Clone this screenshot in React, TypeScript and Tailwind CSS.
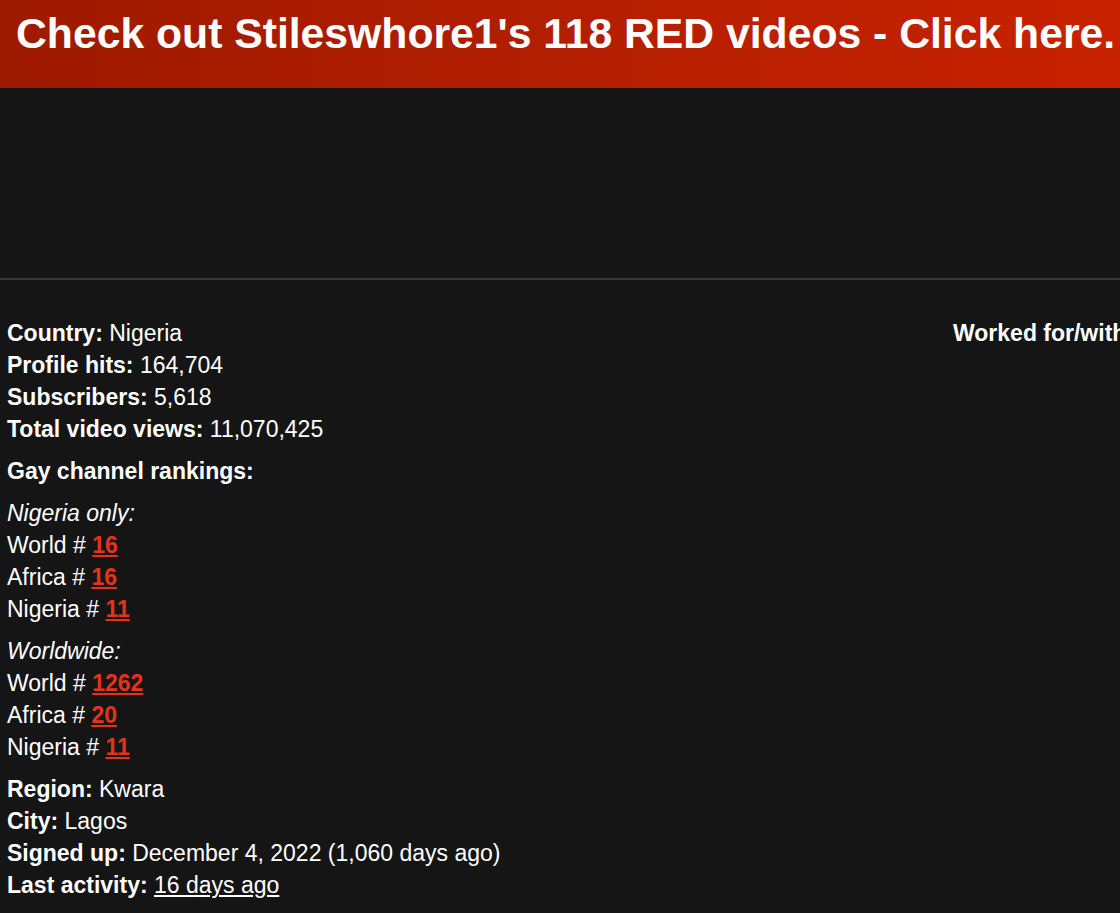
import React from "react";

const Stat = ({ label, children }: { label: string; children: React.ReactNode }) => (
  <div>
    <span className="font-bold">{label}</span> {children}
  </div>
);

const Rank = ({ label, n }: { label: string; n: string }) => (
  <div>
    {label} #{" "}
    <a href="#" className="font-bold text-[#e5321a] underline">
      {n}
    </a>
  </div>
);

const App = () => {
  return (
    <div className="min-h-[913px] bg-[#151515] text-white font-['Liberation_Sans',Arial,sans-serif] overflow-hidden">
      <a
        href="#"
        className="block h-[88px] bg-gradient-to-r from-[#9e1a00] to-[#c82200] pl-[16px] pt-[9px] text-[42.7px] font-bold leading-[48px] whitespace-nowrap"
      >
        Check out Stileswhore1's 118 RED videos - Click here.
      </a>
      <div className="h-[190px]" />
      <div className="h-[2px] bg-[#383838]" />
      <div className="flex pt-[37px] text-[23px] leading-[32px]">
        <div className="w-[953px] shrink-0 pl-[7px] flex flex-col gap-[10px]">
          <div>
            <Stat label="Country:">Nigeria</Stat>
            <Stat label="Profile hits:">164,704</Stat>
            <Stat label="Subscribers:">5,618</Stat>
            <Stat label="Total video views:">11,070,425</Stat>
          </div>
          <div className="font-bold">Gay channel rankings:</div>
          <div>
            <div className="italic">Nigeria only:</div>
            <Rank label="World" n="16" />
            <Rank label="Africa" n="16" />
            <Rank label="Nigeria" n="11" />
          </div>
          <div>
            <div className="italic">Worldwide:</div>
            <Rank label="World" n="1262" />
            <Rank label="Africa" n="20" />
            <Rank label="Nigeria" n="11" />
          </div>
          <div>
            <Stat label="Region:">Kwara</Stat>
            <Stat label="City:">Lagos</Stat>
            <Stat label="Signed up:">December 4, 2022 (1,060 days ago)</Stat>
            <Stat label="Last activity:">
              <a href="#" className="underline">16 days ago</a>
            </Stat>
          </div>
        </div>
        <div className="whitespace-nowrap font-bold">Worked for/with</div>
      </div>
    </div>
  );
};

export default App;
